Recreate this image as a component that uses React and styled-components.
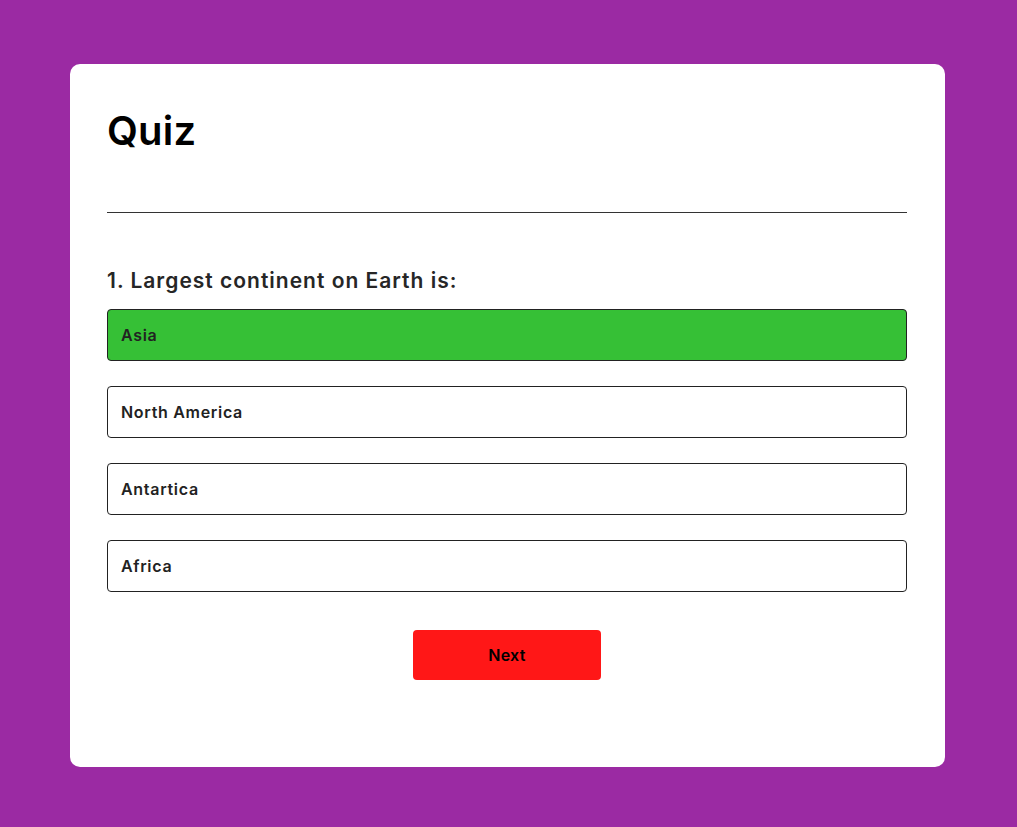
import React, { useState } from "react";
import styled, { createGlobalStyle } from "styled-components";

const GlobalStyle = createGlobalStyle`
  * {
    box-sizing: border-box;
  }
  body {
    margin: 0;
    background: #9b2aa3;
    font-family: "Inter", "Open Sans", sans-serif;
  }
`;

const Page = styled.div`
  min-height: 100vh;
  display: flex;
  justify-content: flex-start;
  align-items: flex-start;
  padding: 64px 0 0 70px;
`;

const Card = styled.div`
  width: 875px;
  height: 703px;
  background: #fff;
  border-radius: 10px;
  padding: 37px 38px 37px 37px;
  display: flex;
  flex-direction: column;
`;

const Title = styled.h1`
  margin: 0;
  font-size: 40px;
  font-weight: 600;
  line-height: 60px;
  color: #000;
  letter-spacing: 0.2px;
`;

const Divider = styled.hr`
  margin: 51px 0 0;
  border: none;
  height: 1px;
  background: #333;
`;

const Question = styled.h2`
  margin: 53px 0 0;
  font-size: 21px;
  font-weight: 600;
  line-height: 30px;
  color: #262626;
  letter-spacing: 1px;
`;

const Options = styled.ul`
  list-style: none;
  margin: 13px 0 0;
  padding: 0;
  display: flex;
  flex-direction: column;
  gap: 25px;
`;

const Option = styled.li`
  height: 52px;
  display: flex;
  align-items: center;
  padding-left: 13px;
  border: 1px solid #222;
  border-radius: 4px;
  font-size: 16px;
  font-weight: 600;
  color: #222;
  letter-spacing: 0.7px;
  cursor: pointer;
  background: ${(p) => (p.$correct ? "#36c036" : "#fff")};
`;

const NextButton = styled.button`
  align-self: center;
  margin-top: 38px;
  width: 188px;
  height: 50px;
  border: none;
  border-radius: 4px;
  background: #ff1717;
  color: #000;
  font-family: inherit;
  font-size: 16px;
  font-weight: 600;
  letter-spacing: 0.3px;
  cursor: pointer;
`;

const options = ["Asia", "North America", "Antartica", "Africa"];

export default function App() {
  const [picked] = useState(0);
  return (
    <Page>
      <GlobalStyle />
      <Card>
        <Title>Quiz</Title>
        <Divider />
        <Question>1. Largest continent on Earth is:</Question>
        <Options>
          {options.map((o, i) => (
            <Option key={o} $correct={i === picked}>
              {o}
            </Option>
          ))}
        </Options>
        <NextButton>Next</NextButton>
      </Card>
    </Page>
  );
}
